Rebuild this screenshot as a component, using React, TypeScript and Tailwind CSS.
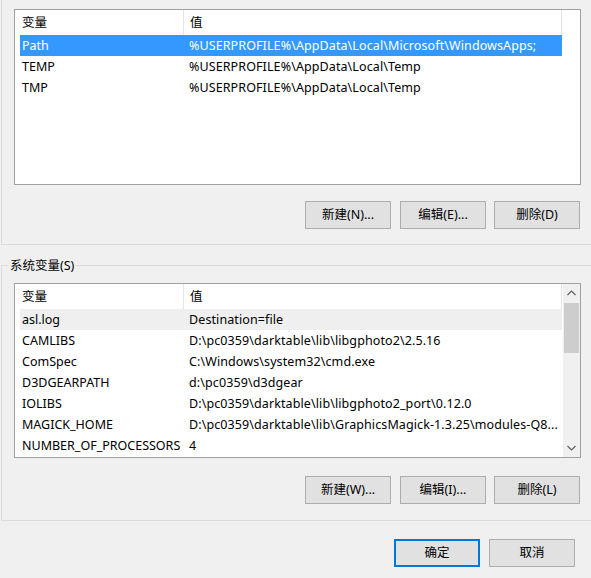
import React from "react";

type Row = { name: string; value: string };

const userVars: Row[] = [
  { name: "Path", value: "%USERPROFILE%\\AppData\\Local\\Microsoft\\WindowsApps;" },
  { name: "TEMP", value: "%USERPROFILE%\\AppData\\Local\\Temp" },
  { name: "TMP", value: "%USERPROFILE%\\AppData\\Local\\Temp" },
];

const systemVars: Row[] = [
  { name: "asl.log", value: "Destination=file" },
  { name: "CAMLIBS", value: "D:\\pc0359\\darktable\\lib\\libgphoto2\\2.5.16" },
  { name: "ComSpec", value: "C:\\Windows\\system32\\cmd.exe" },
  { name: "D3DGEARPATH", value: "d:\\pc0359\\d3dgear" },
  { name: "IOLIBS", value: "D:\\pc0359\\darktable\\lib\\libgphoto2_port\\0.12.0" },
  { name: "MAGICK_HOME", value: "D:\\pc0359\\darktable\\lib\\GraphicsMagick-1.3.25\\modules-Q8..." },
  { name: "NUMBER_OF_PROCESSORS", value: "4" },
];

const Chevron = ({ up }: { up?: boolean }) => (
  <svg width="9" height="6" viewBox="0 0 9 6" className="block">
    <polyline
      points={up ? "0.5,5 4.5,1 8.5,5" : "0.5,1 4.5,5 8.5,1"}
      fill="none"
      stroke="#606060"
      strokeWidth="1.2"
    />
  </svg>
);

const DlgButton = ({ label, primary }: { label: string; primary?: boolean }) => (
  <button
    className={
      "w-[86px] h-[28px] pt-[1px] bg-[#e1e1e1] text-[12.5px] text-black flex items-center justify-center " +
      (primary ? "border-2 border-[#0078d7]" : "border border-[#adadad]")
    }
  >
    {label}
  </button>
);

// list view with a header and two columns; "selected" picks the highlighted row
const VarList = ({
  rows,
  selected,
  active,
  scroll,
  height,
}: {
  rows: Row[];
  selected: number;
  active: boolean;
  scroll?: boolean;
  height: string;
}) => (
  <div className={"w-[567px] border border-[#a0a0a0] bg-white flex " + height}>
    <div className="flex-1 flex flex-col overflow-hidden">
      <div className="h-[25px] flex shrink-0">
        <div className="w-[169px] h-full border-r border-[#e5e5e5] pl-[7px] pt-[2px] flex items-center">变量</div>
        <div className="w-[378px] h-full border-r border-[#e5e5e5] pl-[6px] pt-[2px] flex items-center">值</div>
      </div>
      {rows.map((r, i) => (
        <div
          key={r.name}
          className={
            "ml-[5px] w-[542px] h-[21px] pt-[1px] flex items-center shrink-0 " +
            (i === selected ? (active ? "bg-[#3399ff] text-white" : "bg-[#efefef]") : "")
          }
        >
          <div className="w-[163px] shrink-0 pl-[2px] whitespace-nowrap">{r.name}</div>
          <div className="pl-[6px] whitespace-nowrap tracking-[0.1px]">{r.value}</div>
        </div>
      ))}
    </div>
    {scroll && (
      <div className="w-[17px] bg-[#f0f0f0] flex flex-col items-center">
        <div className="h-[18px] flex items-center justify-center">
          <Chevron up />
        </div>
        <div className="mt-[1px] w-[15px] h-[50px] bg-[#cdcdcd]" />
        <div className="flex-1" />
        <div className="h-[18px] flex items-center justify-center">
          <Chevron />
        </div>
      </div>
    )}
  </div>
);

export default function App() {
  return (
    <div
      className="w-[591px] h-[578px] bg-[#f0f0f0] overflow-hidden text-[12.5px] text-black"
      style={{ fontFamily: '"Noto Sans", "Noto Sans CJK SC", sans-serif' }}
    >
      {/* user variables */}
      <div className="ml-[1px] h-[245px] border-l border-b border-[#dcdcdc] pl-[12px] pt-[9px] flex flex-col">
        <VarList rows={userVars} selected={0} active height="h-[176px]" />
        <div className="mt-[16px] w-[566px] flex justify-end gap-[8px]">
          <div className="mr-[1px]">
            <DlgButton label="新建(N)..." />
          </div>
          <DlgButton label="编辑(E)..." />
          <DlgButton label="删除(D)" />
        </div>
      </div>

      {/* system variables */}
      <div className="mt-[20px] ml-[1px] h-[256px] border-l border-t border-b border-[#dcdcdc] pl-[12px] flex flex-col">
        <span className="self-start -mt-[9px] ml-[-6px] px-[2px] pt-[1px] bg-[#f0f0f0] leading-[16px]">系统变量(S)</span>
        <div className="mt-[9px]">
          <VarList rows={systemVars} selected={0} active={false} scroll height="h-[175px]" />
        </div>
        <div className="mt-[18px] w-[566px] flex justify-end gap-[8px]">
          <div className="mr-[1px]">
            <DlgButton label="新建(W)..." />
          </div>
          <DlgButton label="编辑(I)..." />
          <DlgButton label="删除(L)" />
        </div>
      </div>

      <div className="mt-[18px] pr-[16px] flex justify-end gap-[9px]">
        <DlgButton label="确定" primary />
        <DlgButton label="取消" />
      </div>
    </div>
  );
}
